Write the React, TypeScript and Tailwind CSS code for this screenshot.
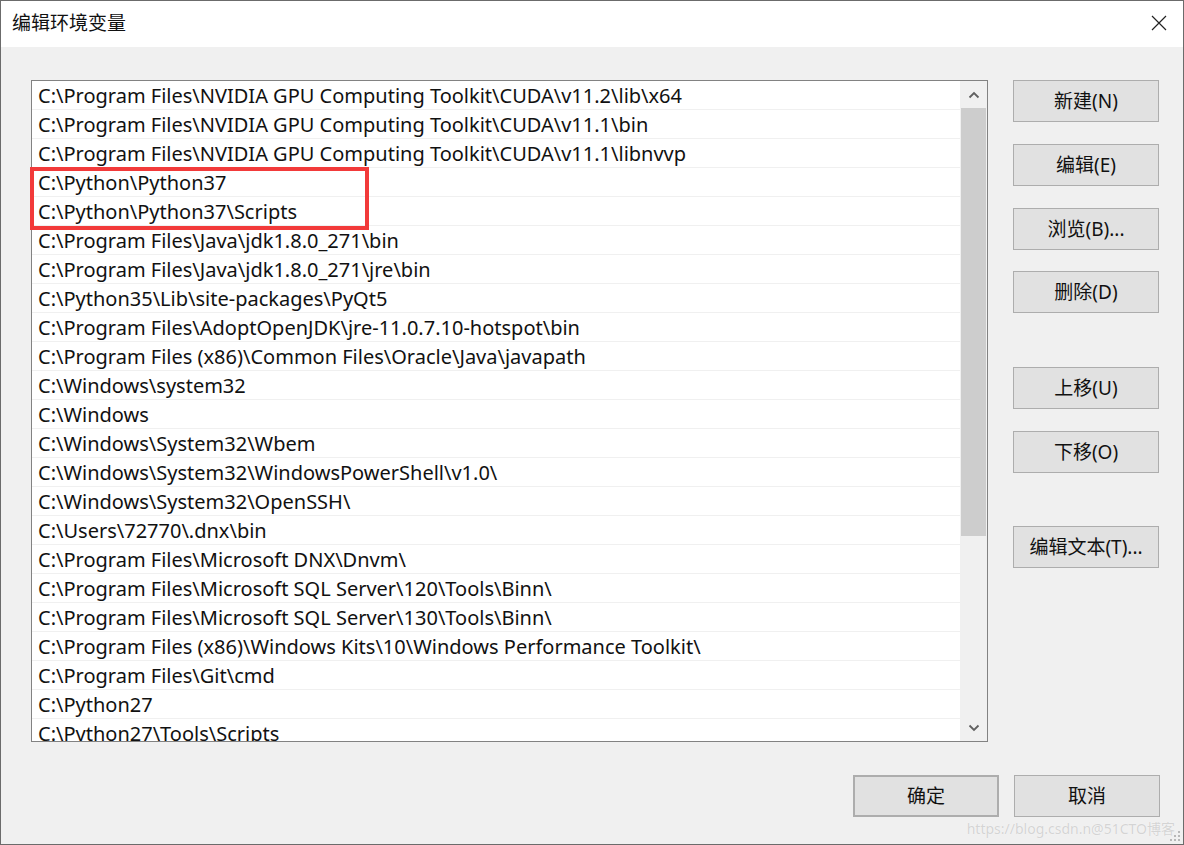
const paths = [
  'C:\\Program Files\\NVIDIA GPU Computing Toolkit\\CUDA\\v11.2\\lib\\x64',
  'C:\\Program Files\\NVIDIA GPU Computing Toolkit\\CUDA\\v11.1\\bin',
  'C:\\Program Files\\NVIDIA GPU Computing Toolkit\\CUDA\\v11.1\\libnvvp',
  'C:\\Python\\Python37',
  'C:\\Python\\Python37\\Scripts',
  'C:\\Program Files\\Java\\jdk1.8.0_271\\bin',
  'C:\\Program Files\\Java\\jdk1.8.0_271\\jre\\bin',
  'C:\\Python35\\Lib\\site-packages\\PyQt5',
  'C:\\Program Files\\AdoptOpenJDK\\jre-11.0.7.10-hotspot\\bin',
  'C:\\Program Files (x86)\\Common Files\\Oracle\\Java\\javapath',
  'C:\\Windows\\system32',
  'C:\\Windows',
  'C:\\Windows\\System32\\Wbem',
  'C:\\Windows\\System32\\WindowsPowerShell\\v1.0\\',
  'C:\\Windows\\System32\\OpenSSH\\',
  'C:\\Users\\72770\\.dnx\\bin',
  'C:\\Program Files\\Microsoft DNX\\Dnvm\\',
  'C:\\Program Files\\Microsoft SQL Server\\120\\Tools\\Binn\\',
  'C:\\Program Files\\Microsoft SQL Server\\130\\Tools\\Binn\\',
  'C:\\Program Files (x86)\\Windows Kits\\10\\Windows Performance Toolkit\\',
  'C:\\Program Files\\Git\\cmd',
  'C:\\Python27',
  'C:\\Python27\\Tools\\Scripts',
];

function Btn({ label, className = '' }: { label: string; className?: string }) {
  return (
    <div
      className={`w-[146px] h-[42px] flex items-center justify-center bg-[#e1e1e1] border border-[#adadad] text-[19px] text-[#111] ${className}`}
    >
      {label}
    </div>
  );
}

export default function App() {
  return (
    <div
      className="w-[1184px] h-[845px] flex flex-col border border-[#6b6b6b] bg-[#f0f0f0] relative overflow-hidden"
      style={{ fontFamily: '"Noto Sans", "Noto Sans CJK SC", sans-serif' }}
    >
      {/* title bar */}
      <div className="h-[46px] bg-white flex items-center justify-between pl-[11px] pr-[16px] shrink-0">
        <span className="text-[19px] text-[#111] -mt-[1px]">编辑环境变量</span>
        <svg width="16" height="16" viewBox="0 0 16 16" className="-mt-[2px]">
          <path d="M1 1 L15 15 M15 1 L1 15" stroke="#222" strokeWidth="1.2" />
        </svg>
      </div>

      <div className="flex pl-[30px] pt-[33px]">
        {/* list */}
        <div className="w-[957px] h-[662px] border border-[#828282] bg-white flex overflow-hidden relative">
          <div className="flex-1 flex flex-col overflow-hidden">
            {paths.map((p) => (
              <div
                key={p}
                className="h-[29px] shrink-0 border-b border-[#f0f0f0] pl-[6px] pt-[1px] text-[20px] leading-[28px] text-[#111] whitespace-nowrap"
              >
                {p}
              </div>
            ))}
          </div>
          {/* scrollbar */}
          <div className="w-[27px] bg-[#f0f0f0] flex flex-col items-center shrink-0">
            <div className="h-[27px] w-full flex items-center justify-center">
              <svg width="12" height="8" viewBox="0 0 12 8">
                <path d="M1.5 6.5 L6 2 L10.5 6.5" fill="none" stroke="#606060" strokeWidth="1.8" />
              </svg>
            </div>
            <div className="w-[25px] h-[428px] bg-[#cdcdcd]" />
            <div className="flex-1" />
            <div className="h-[27px] w-full flex items-center justify-center">
              <svg width="12" height="8" viewBox="0 0 12 8">
                <path d="M1.5 1.5 L6 6 L10.5 1.5" fill="none" stroke="#606060" strokeWidth="1.8" />
              </svg>
            </div>
          </div>
        </div>

        {/* side buttons */}
        <div className="ml-[25px] flex flex-col">
          <Btn label="新建(N)" />
          <Btn label="编辑(E)" className="mt-[22px]" />
          <Btn label="浏览(B)..." className="mt-[22px]" />
          <Btn label="删除(D)" className="mt-[21px]" />
          <Btn label="上移(U)" className="mt-[54px]" />
          <Btn label="下移(O)" className="mt-[22px]" />
          <Btn label="编辑文本(T)..." className="mt-[53px]" />
        </div>
      </div>

      {/* bottom buttons */}
      <div className="flex justify-end gap-[15px] pr-[23px] mt-[33px]">
        <Btn label="确定" className="border-2 border-[#0078d7]" />
        <Btn label="取消" />
      </div>

      {/* annotation */}
      <div className="absolute left-[29px] top-[166px] w-[339px] h-[63px] border-[4px] border-[#f23a3a]" />

      {/* watermark */}
      <div className="absolute right-[8px] bottom-[5px] text-[14px] text-[#d4d4d4] whitespace-nowrap [text-shadow:0_0_1px_#ffffff]">
        https://blog.csdn.n@51CTO博客
      </div>
      {/* size grip */}
      <svg className="absolute right-[2px] bottom-[2px]" width="12" height="12" viewBox="0 0 12 12">
        <rect x="9" y="1" width="2" height="2" fill="#b8b8b8" />
        <rect x="5" y="5" width="2" height="2" fill="#b8b8b8" />
        <rect x="9" y="5" width="2" height="2" fill="#b8b8b8" />
        <rect x="1" y="9" width="2" height="2" fill="#b8b8b8" />
        <rect x="5" y="9" width="2" height="2" fill="#b8b8b8" />
        <rect x="9" y="9" width="2" height="2" fill="#b8b8b8" />
      </svg>
    </div>
  );
}
